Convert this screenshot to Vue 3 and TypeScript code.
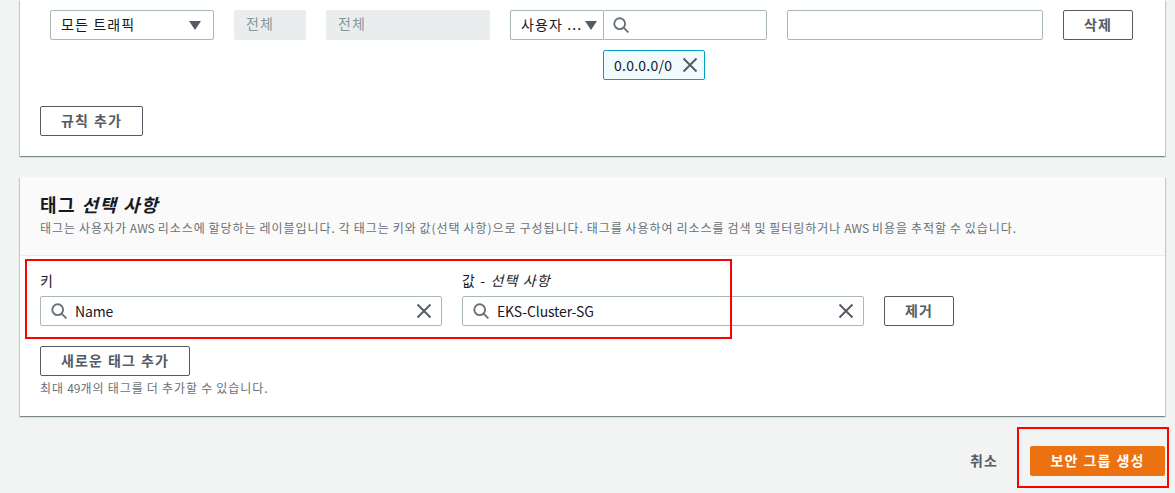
<script setup lang="ts">
interface TagField { label: string; optional?: string; value: string }
const tagFields: TagField[] = [
  { label: '키', value: 'Name' },
  { label: '값 - ', optional: '선택 사항', value: 'EKS-Cluster-SG' },
]
</script>

<template>
  <div class="page">
    <section class="card rules">
      <div class="rule-row">
        <div class="select traffic"><span class="ko">모든 트래픽</span><i class="caret"></i></div>
        <div class="disabled proto ko">전체</div>
        <div class="disabled port ko">전체</div>
        <div class="source">
          <div class="select source-type"><span class="ko">사용자 ...</span><i class="caret"></i></div>
          <div class="source-col">
            <div class="search source-search">
              <svg class="ico" viewBox="0 0 16 16"><circle cx="6.7" cy="6.7" r="5.4" /><path d="M10.6 10.6 15.4 15.4" /></svg>
            </div>
            <div class="token">
              <span class="ip">0.0.0.0/0</span>
              <svg class="ico x" viewBox="0 0 16 16"><path d="M1.5 1.5l13 13M14.5 1.5l-13 13" /></svg>
            </div>
          </div>
        </div>
        <div class="desc-input"></div>
        <button class="btn del ko">삭제</button>
      </div>
      <button class="btn add-rule ko">규칙 추가</button>
    </section>

    <section class="card tags">
      <header class="tags-head">
        <h2 class="ko">태그 <em>선택 사항</em></h2>
        <p class="ko">태그는 사용자가 <span class="latin">AWS</span> 리소스에 할당하는 레이블입니다. 각 태그는 키와 값(선택 사항)으로 구성됩니다. 태그를 사용하여 리소스를 검색 및 필터링하거나 <span class="latin">AWS</span> 비용을 추적할 수 있습니다.</p>
      </header>
      <div class="tags-body">
        <div class="tag-row">
          <div v-for="f in tagFields" :key="f.label" class="field">
            <label class="ko">{{ f.label }}<em v-if="f.optional">{{ f.optional }}</em></label>
            <div class="search">
              <svg class="ico" viewBox="0 0 16 16"><circle cx="6.7" cy="6.7" r="5.4" /><path d="M10.6 10.6 15.4 15.4" /></svg>
              <span class="val">{{ f.value }}</span>
              <svg class="ico x" viewBox="0 0 16 16"><path d="M1.5 1.5l13 13M14.5 1.5l-13 13" /></svg>
            </div>
          </div>
          <button class="btn remove ko">제거</button>
        </div>
        <button class="btn add-tag ko">새로운 태그 추가</button>
        <p class="hint ko">최대 <span class="latin">49</span>개의 태그를 더 추가할 수 있습니다.</p>
      </div>
    </section>

    <footer class="foot">
      <span class="cancel ko">취소</span>
      <button class="primary ko">보안 그룹 생성</button>
    </footer>

    <div class="mark mark-fields"></div>
    <div class="mark mark-submit"></div>
  </div>
</template>

<style>
html, body { margin: 0; background: #f2f3f3; }
</style>

<style scoped>
.page {
  position: relative;
  width: 1175px;
  height: 493px;
  overflow: hidden;
  background: #f2f3f3;
  padding: 0 10px 0 20px;
  box-sizing: border-box;
  font-family: "Noto Sans CJK KR", "Noto Sans", sans-serif;
  font-size: 14px;
  color: #16191f;
}
.ko { letter-spacing: .08em; }
.latin { letter-spacing: 0; }
.card {
  background: #fff;
  box-shadow: 0 1px 1px 0 rgba(0, 28, 36, .3), 1px 1px 1px 0 rgba(0, 28, 36, .15), -1px 1px 1px 0 rgba(0, 28, 36, .15);
}
.rules { height: 156px; box-sizing: border-box; padding: 10px 20px 0; }
.rule-row { display: flex; align-items: flex-start; padding-left: 10px; height: 96px; }
.select {
  height: 30px;
  box-sizing: border-box;
  border: 1px solid #aab7b8;
  border-radius: 2px;
  background: #fff;
  display: flex;
  align-items: center;
  justify-content: space-between;
  padding-bottom: 2px;
}
.traffic { width: 164px; padding: 0 12px 2px 10px; }
.caret {
  width: 0;
  height: 0;
  border-left: 6px solid transparent;
  border-right: 6px solid transparent;
  border-top: 9px solid #545b64;
  flex: none;
  margin-top: 2px;
}
.disabled {
  height: 30px;
  line-height: 27px;
  background: #eaeded;
  border-radius: 2px;
  color: #879596;
  padding-left: 12px;
  box-sizing: border-box;
  margin-left: 20px;
}
.proto { width: 72px; }
.port { width: 164px; }
.source { display: flex; margin-left: 20px; }
.source-type { width: 93px; padding: 0 6px 2px 10px; border-radius: 2px 0 0 2px; border-right: 0; }
.source-col { width: 164px; }
.search {
  height: 30px;
  box-sizing: border-box;
  border: 1px solid #aab7b8;
  border-radius: 2px;
  background: #fff;
  display: flex;
  align-items: center;
  padding: 0 9px 0 10px;
}
.source-search { border-radius: 0 2px 2px 0; padding-left: 9px; }
.ico {
  width: 16px;
  height: 16px;
  flex: none;
  fill: none;
  stroke: #687078;
  stroke-width: 1.9;
}
.x { stroke: #545b64; }
.token {
  width: 102px;
  height: 30px;
  margin-top: 10px;
  box-sizing: border-box;
  border: 1px solid #00a1c9;
  border-radius: 2px;
  background: #f1faff;
  display: flex;
  align-items: center;
  justify-content: space-between;
  padding: 0 6px 0 10px;
}
.ip { letter-spacing: .25px; }
.desc-input {
  width: 256px;
  height: 30px;
  margin-left: 20px;
  box-sizing: border-box;
  border: 1px solid #aab7b8;
  border-radius: 2px;
}
.btn {
  height: 30px;
  box-sizing: border-box;
  border: 1px solid #545b64;
  border-radius: 2px;
  background: #fff;
  color: #545b64;
  font-family: inherit;
  font-size: inherit;
  font-weight: 700;
  word-spacing: .05em;
  padding: 0 0 2px;
  display: block;
}
.del { width: 70px; margin-left: 20px; }
.add-rule { width: 103px; }
.tags { margin-top: 21px; height: 239px; }
.tags-head {
  height: 79px;
  box-sizing: border-box;
  background: #fafafa;
  border-bottom: 1px solid #eaeded;
  padding: 15px 20px 0;
}
h2 { margin: 0; font-size: 18px; line-height: 24px; font-weight: 700; }
h2 em, label em { font-style: italic; }
h2 em { font-weight: 700; }
.tags-head p { margin: 3px 0 0; font-size: 12px; line-height: 18px; color: #687078; word-spacing: -.06em; }
.tags-body { padding: 14px 20px 0; }
.tag-row { display: flex; align-items: flex-end; gap: 20px; }
.field { width: 402px; }
label { display: block; line-height: 20px; margin-bottom: 6px; }
.search .val { margin-left: 8px; flex: 1; letter-spacing: -.14px; padding-bottom: 1px; }
.remove { width: 70px; }
.add-tag { width: 150px; margin-top: 20px; }
.hint { margin: 4px 0 0; font-size: 12px; line-height: 16px; color: #687078; word-spacing: -.04em; }
.foot {
  display: flex;
  justify-content: flex-end;
  align-items: center;
  margin-top: 30px;
}
.cancel { color: #545b64; font-weight: 700; margin-right: 32px; padding-bottom: 2px; }
.primary {
  width: 135px;
  height: 30px;
  border: 0;
  border-radius: 2px;
  background: #ec7211;
  color: #fff;
  font-family: inherit;
  font-size: inherit;
  font-weight: 700;
  word-spacing: .05em;
  padding: 0 0 2px;
}
.mark { position: absolute; border: 2px solid #f00; box-sizing: border-box; }
.mark-fields { left: 25px; top: 259px; width: 707px; height: 80px; }
.mark-submit { left: 1017px; top: 427px; width: 152px; height: 61px; }
</style>
